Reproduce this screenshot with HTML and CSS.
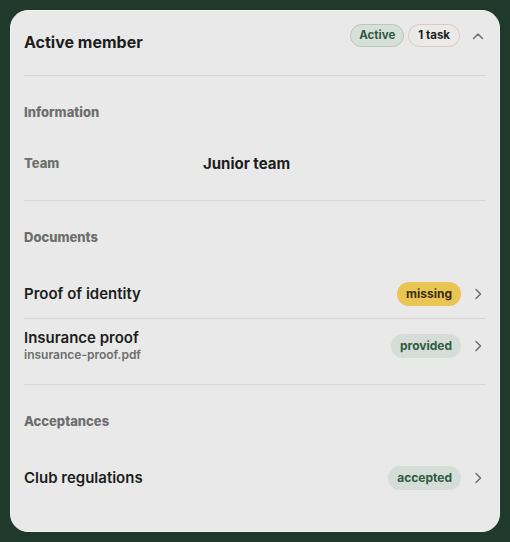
FILE: index.html
```html
<!DOCTYPE html>
<html lang="en">
<head>
    <meta charset="UTF-8">
    <meta name="viewport" content="width=device-width, initial-scale=1.0">
    <title>Active member</title>
    <link rel="stylesheet" href="styles.css">
</head>
<body>
    <div class="card">
        <div class="card-header">
            <h1>Active member</h1>
            <div class="header-right">
                <span class="pill pill-active">Active</span>
                <span class="pill pill-task">1 task</span>
                <span class="chev chev-up">
                    <svg width="12" height="8" viewBox="0 0 12 8"><path d="M1.5 6.5 6 2l4.5 4.5" fill="none" stroke="#6f6f6f" stroke-width="1.5" stroke-linecap="round" stroke-linejoin="round"/></svg>
                </span>
            </div>
        </div>

        <div class="section">
            <h2>Information</h2>
            <div class="kv-row">
                <span class="kv-key">Team</span>
                <span class="kv-value">Junior team</span>
            </div>
        </div>

        <div class="section">
            <h2>Documents</h2>
            <div class="item">
                <div class="item-text">
                    <div class="item-title">Proof of identity</div>
                </div>
                <span class="status status-missing">missing</span>
                <span class="chev">
                    <svg width="8" height="12" viewBox="0 0 8 12"><path d="M2 1.5 6.5 6 2 10.5" fill="none" stroke="#6f6f6f" stroke-width="1.5" stroke-linecap="round" stroke-linejoin="round"/></svg>
                </span>
            </div>
            <div class="item">
                <div class="item-text">
                    <div class="item-title">Insurance proof</div>
                    <div class="item-sub">insurance-proof.pdf</div>
                </div>
                <span class="status status-ok">provided</span>
                <span class="chev">
                    <svg width="8" height="12" viewBox="0 0 8 12"><path d="M2 1.5 6.5 6 2 10.5" fill="none" stroke="#6f6f6f" stroke-width="1.5" stroke-linecap="round" stroke-linejoin="round"/></svg>
                </span>
            </div>
        </div>

        <div class="section">
            <h2>Acceptances</h2>
            <div class="item">
                <div class="item-text">
                    <div class="item-title">Club regulations</div>
                </div>
                <span class="status status-ok">accepted</span>
                <span class="chev">
                    <svg width="8" height="12" viewBox="0 0 8 12"><path d="M2 1.5 6.5 6 2 10.5" fill="none" stroke="#6f6f6f" stroke-width="1.5" stroke-linecap="round" stroke-linejoin="round"/></svg>
                </span>
            </div>
        </div>
    </div>
</body>
</html>
```

FILE: styles.css
```css
body {
    margin: 0;
    padding: 10px;
    background-color: #1f3a2c;
    font-family: Inter, "Noto Sans", sans-serif;
    color: #1d1d1d;
}
.card {
    background-color: #e8e9e8;
    border: 1px solid #f1f3f1;
    border-radius: 18px;
    padding: 0 13px 16px;
    min-height: 504px;
}
.card-header {
    display: flex;
    justify-content: space-between;
    align-items: flex-start;
    padding: 13px 0 21px;
    border-bottom: 1px solid #d6d8d6;
}
.card-header h1 {
    margin: 6px 0 0;
    font-size: 16px;
    line-height: 24px;
    font-weight: 700;
}
.header-right {
    display: flex;
    align-items: center;
    gap: 4px;
}
.pill {
    font-size: 11.5px;
    font-weight: 700;
    line-height: 15px;
    padding: 3px 8px;
    border-radius: 12px;
    border: 1px solid;
}
.pill-active {
    background-color: #d6e0d8;
    border-color: #b8c7bc;
    color: #2f5a3f;
}
.pill-task {
    background-color: #ebeae8;
    border-color: #dbcac2;
    color: #1d1d1d;
    padding: 3px 9px;
}
.chev {
    width: 17px;
    margin-left: 8px;
    display: flex;
    justify-content: center;
    align-items: center;
}
.chev-up {
    margin-left: 5px;
}
.section {
    padding: 27px 0 12px;
    border-bottom: 1px solid #d6d8d6;
}
.section:last-child {
    border-bottom: none;
}
.section h2 {
    margin: 0 0 23px;
    font-size: 13px;
    line-height: 18px;
    font-weight: 800;
    color: #6d6e6d;
}
.kv-row {
    display: grid;
    grid-template-columns: 179px 1fr;
    align-items: center;
    padding: 9px 0 15px;
    min-height: 20px;
}
.kv-key {
    font-size: 13px;
    font-weight: 800;
    color: #6d6e6d;
}
.kv-value {
    font-size: 15px;
    font-weight: 700;
}
.item {
    display: flex;
    align-items: center;
    padding: 10px 0;
    min-height: 29px;
    border-bottom: 1px solid #d6d8d6;
}
.item:last-child {
    border-bottom: none;
}
.item-text {
    flex: 1;
}
.item-title {
    font-size: 15px;
    font-weight: 600;
    line-height: 18px;
}
.item-sub {
    font-size: 12px;
    font-weight: 600;
    line-height: 15px;
    color: #6d6e6d;
}
.status {
    font-size: 12px;
    font-weight: 700;
    line-height: 16px;
    padding: 4px 9px;
    border-radius: 12px;
}
.status-missing {
    background-color: #ebc553;
    color: #3a2f0c;
}
.status-ok {
    background-color: #d4ddd7;
    color: #2f5a3f;
}
```
